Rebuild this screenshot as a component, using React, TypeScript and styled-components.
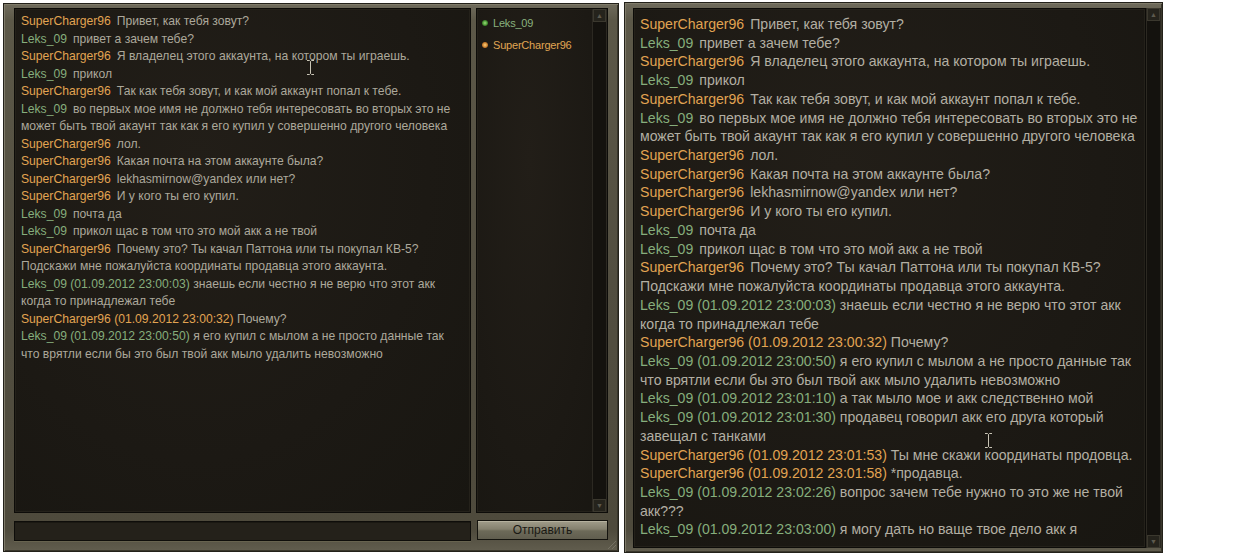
import React from 'react';
import styled, { createGlobalStyle } from 'styled-components';

const GlobalStyle = createGlobalStyle`
  html, body {
    margin: 0;
    padding: 0;
    background: #ffffff;
  }
  body {
    font-family: 'Liberation Sans', Arial, sans-serif;
  }
`;

type Who = 'sc' | 'lk';

type Message = {
  who: Who;
  time?: string;
  lines: string[];
};

const NAMES: Record<Who, string> = {
  sc: 'SuperCharger96',
  lk: 'Leks_09',
};

const messages: Message[] = [
  { who: 'sc', lines: ['Привет, как тебя зовут?'] },
  { who: 'lk', lines: ['привет а зачем тебе?'] },
  { who: 'sc', lines: ['Я владелец этого аккаунта, на котором ты играешь.'] },
  { who: 'lk', lines: ['прикол'] },
  { who: 'sc', lines: ['Так как тебя зовут, и как мой аккаунт попал к тебе.'] },
  {
    who: 'lk',
    lines: [
      'во первых мое имя не должно тебя интересовать во вторых это не',
      'может быть твой акаунт так как я его купил у совершенно другого человека',
    ],
  },
  { who: 'sc', lines: ['лол.'] },
  { who: 'sc', lines: ['Какая почта на этом аккаунте была?'] },
  { who: 'sc', lines: ['lekhasmirnow@yandex или нет?'] },
  { who: 'sc', lines: ['И у кого ты его купил.'] },
  { who: 'lk', lines: ['почта да'] },
  { who: 'lk', lines: ['прикол щас в том что это мой акк а не твой'] },
  {
    who: 'sc',
    lines: [
      'Почему это? Ты качал Паттона или ты покупал КВ-5?',
      'Подскажи мне пожалуйста координаты продавца этого аккаунта.',
    ],
  },
  {
    who: 'lk',
    time: '01.09.2012 23:00:03',
    lines: ['знаешь если честно я не верю что этот акк', 'когда то принадлежал тебе'],
  },
  { who: 'sc', time: '01.09.2012 23:00:32', lines: ['Почему?'] },
  {
    who: 'lk',
    time: '01.09.2012 23:00:50',
    lines: [
      'я его купил с мылом а не просто данные так',
      'что врятли если бы это был твой акк мыло удалить невозможно',
    ],
  },
  { who: 'lk', time: '01.09.2012 23:01:10', lines: ['а так мыло мое и акк следственно мой'] },
  {
    who: 'lk',
    time: '01.09.2012 23:01:30',
    lines: ['продавец говорил акк его друга который', 'завещал с танками'],
  },
  { who: 'sc', time: '01.09.2012 23:01:53', lines: ['Ты мне скажи координаты продовца.'] },
  { who: 'sc', time: '01.09.2012 23:01:58', lines: ['*продавца.'] },
  {
    who: 'lk',
    time: '01.09.2012 23:02:26',
    lines: ['вопрос зачем тебе нужно то это же не твой', 'акк???'],
  },
  { who: 'lk', time: '01.09.2012 23:03:00', lines: ['я могу дать но ваще твое дело акк я'] },
];

const Page = styled.div`
  display: flex;
  align-items: flex-start;
  gap: 5px;
  padding-left: 3px;
  height: 556px;
  overflow: hidden;
`;

const Frame = styled.div`
  position: relative;
  box-sizing: border-box;
  background: linear-gradient(180deg, #6f6b5c 0%, #5c5848 3%, #524e40 50%, #4e4a3c 96%, #615d4e 100%);
  border: 1px solid #23211a;
  box-shadow: inset 1px 1px 0 #7f7b6a, inset -1px -1px 0 #3a372c;
`;

const LeftWindow = styled(Frame)`
  width: 616px;
  height: 549px;
  margin-top: 3px;
  padding: 4px 8px 0 10px;
  display: grid;
  grid-template-columns: 457px 134px;
  grid-template-rows: 505px 20px;
  column-gap: 5px;
  row-gap: 8px;
`;

const RightWindow = styled(Frame)`
  width: 539px;
  height: 551px;
  margin-top: 2px;
  padding: 5px 1px 4px 8px;
  display: flex;
`;

const Well = styled.div`
  box-sizing: border-box;
  background: radial-gradient(ellipse at 40% 30%, #221e18 0%, #1c1914 60%, #181611 100%);
  border: 1px solid #0d0c09;
  box-shadow: inset 0 0 0 1px #24211a;
  overflow: hidden;
`;

const ChatLog = styled(Well)<{ $size: number; $line: number; $top: number }>`
  padding: ${(p) => p.$top}px 0 0 6px;
  font-size: ${(p) => p.$size}px;
  line-height: ${(p) => p.$line}px;
  color: ${(p) => (p.$size > 13 ? '#b3afa3' : '#aca89b')};
  white-space: nowrap;
`;

const RightLog = styled(ChatLog)`
  flex: 1;
`;

const Line = styled.div``;

const Name = styled.span<{ $who: Who; $gap: boolean }>`
  color: ${(p) => (p.$who === 'sc' ? '#e2a452' : '#86ae7c')};
  margin-right: ${(p) => (p.$gap ? '6px' : '0')};
`;

const UsersPanel = styled(Well)`
  flex: 1;
  display: flex;
`;

const UserList = styled.div`
  flex: 1;
  padding: 3px 0 0 5px;
`;

const UserRow = styled.div<{ $who: Who }>`
  display: flex;
  align-items: center;
  gap: 5px;
  height: 22px;
  font-size: 11px;
  letter-spacing: -0.2px;
  color: ${(p) => (p.$who === 'sc' ? '#e0a653' : '#89b27e')};
`;

const Dot = styled.span<{ $who: Who }>`
  width: 6px;
  height: 6px;
  border-radius: 50%;
  background: ${(p) =>
    p.$who === 'sc'
      ? 'radial-gradient(circle, #ffd27a 0%, #c4782a 60%, rgba(120,70,20,0.3) 100%)'
      : 'radial-gradient(circle, #9be07a 0%, #3f8a2c 60%, rgba(30,70,20,0.3) 100%)'};
`;

const ScrollBar = styled.div<{ $width: number }>`
  box-sizing: border-box;
  width: ${(p) => p.$width}px;
  display: flex;
  flex-direction: column;
  background: #14120e;
  border-left: 1px solid #2c2922;
  border-right: 1px solid #2c2922;
`;

const Track = styled.div`
  flex: 1;
`;

const Arrow = styled.div`
  box-sizing: border-box;
  height: 13px;
  display: flex;
  align-items: center;
  justify-content: center;
  background: #25231c;
  border: 1px solid #3b382e;
  color: #5d5a4e;
  font-size: 7px;
  line-height: 1;
`;

const UsersColumn = styled.div`
  display: flex;
  padding-right: 2px;
`;

const InputBox = styled.div`
  box-sizing: border-box;
  background: #24211a;
  border: 1px solid #0e0d0a;
  box-shadow: inset 0 1px 0 #1a1812, 0 1px 0 #67634f;
`;

const SendButton = styled.button`
  box-sizing: border-box;
  margin: -1px 2px 1px 1px;
  height: 20px;
  padding: 0;
  border: 1px solid #15140f;
  background: linear-gradient(180deg, #a09c8a 0%, #85816f 45%, #6d6a59 55%, #615e4f 100%);
  box-shadow: inset 0 1px 0 #b5b19e;
  color: #1a1914;
  font-family: 'Liberation Sans', Arial, sans-serif;
  font-size: 12px;
  cursor: pointer;
`;

const Grip = styled.div`
  position: absolute;
  right: 2px;
  bottom: 2px;
  width: 10px;
  height: 10px;
  background: repeating-linear-gradient(135deg, transparent 0 2px, #7c786a 2px 3px);
  clip-path: polygon(100% 0, 100% 100%, 0 100%);
  opacity: 0.8;
`;

const Cursor = styled.svg<{ $left: number; $top: number }>`
  position: absolute;
  left: ${(p) => p.$left}px;
  top: ${(p) => p.$top}px;
  pointer-events: none;
`;

const IBeam = ({ left, top }: { left: number; top: number }) => (
  <Cursor $left={left} $top={top} width="9" height="17" viewBox="0 0 9 17">
    <path
      d="M1 1.5h2.5L4.5 2.5 5.5 1.5H8M4.5 2.5v12M1 15.5h2.5l1-1 1 1H8"
      fill="none"
      stroke="#c9c5b6"
      strokeWidth="1"
    />
  </Cursor>
);

const Messages = ({ list }: { list: Message[] }) => (
  <>
    {list.map((m, i) =>
      m.lines.map((text, j) => (
        <Line key={`${i}-${j}`}>
          {j === 0 && (
            <Name $who={m.who} $gap={!m.time}>
              {NAMES[m.who]}
              {m.time ? ` (${m.time}) ` : ''}
            </Name>
          )}
          {text}
        </Line>
      ))
    )}
  </>
);

const App = () => {
  return (
    <>
      <GlobalStyle />
      <Page>
        <LeftWindow>
          <ChatLog $size={12.15} $line={17.5} $top={4}>
            <Messages list={messages.slice(0, 16)} />
          </ChatLog>
          <UsersColumn>
            <UsersPanel>
              <UserList>
                <UserRow $who="lk">
                  <Dot $who="lk" />
                  Leks_09
                </UserRow>
                <UserRow $who="sc">
                  <Dot $who="sc" />
                  SuperCharger96
                </UserRow>
              </UserList>
              <ScrollBar $width={15}>
                <Arrow>▲</Arrow>
                <Track />
                <Arrow>▼</Arrow>
              </ScrollBar>
            </UsersPanel>
          </UsersColumn>
          <InputBox />
          <SendButton type="button">Отправить</SendButton>
          <Grip />
          <IBeam left={302} top={55} />
        </LeftWindow>
        <RightWindow>
          <RightLog $size={14.1} $line={18.72} $top={6}>
            <Messages list={messages} />
          </RightLog>
          <ScrollBar $width={15}>
            <Arrow>▲</Arrow>
            <Track />
            <Arrow>▼</Arrow>
          </ScrollBar>
          <IBeam left={359} top={429} />
        </RightWindow>
      </Page>
    </>
  );
};

export default App;
